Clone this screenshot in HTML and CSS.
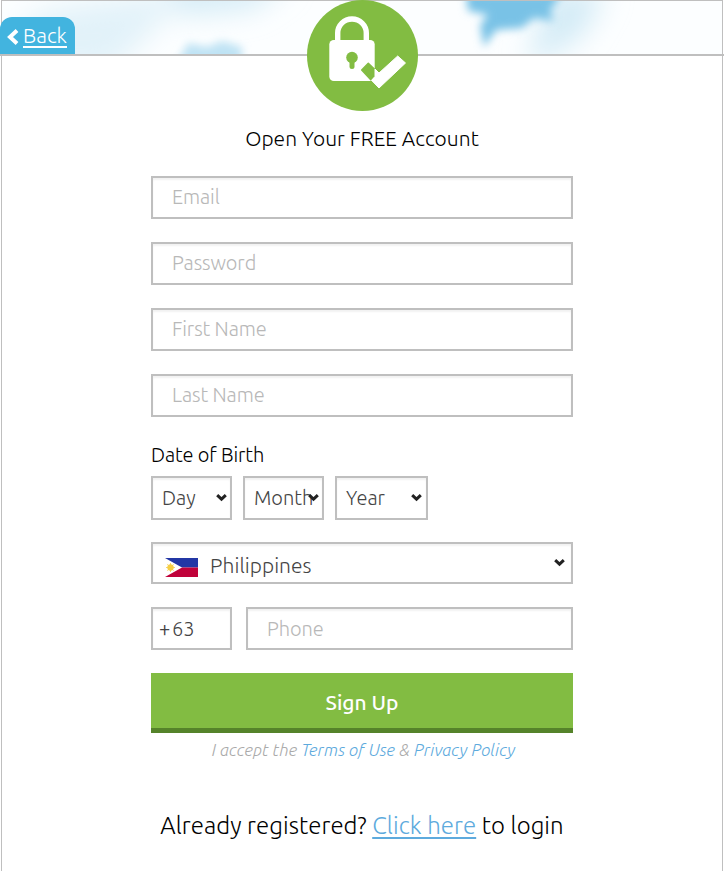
FILE: index.html
```
<!DOCTYPE html>
<html lang="en">
<head>
    <meta charset="UTF-8">
    <meta name="viewport" content="width=device-width, initial-scale=1.0">
    <title>Open Your FREE Account</title>
    <link rel="stylesheet" href="styles.css">
</head>
<body>

<div class="page">
    <header class="header">
        <svg class="sky" viewBox="0 0 720 53" preserveAspectRatio="none">
            <defs>
                <filter id="soft" x="-50%" y="-50%" width="200%" height="200%"><feGaussianBlur stdDeviation="4"/></filter>
                <filter id="softer" x="-50%" y="-50%" width="200%" height="200%"><feGaussianBlur stdDeviation="14"/></filter>
            </defs>
            <rect width="720" height="53" fill="#fcfeff"/>
            <g filter="url(#softer)">
                <path d="M20 20L60 5L180 -10L160 20L110 70L20 70Z" fill="#e2f2f9"/>
                <path d="M165 -20L290 -20L250 8L175 14Z" fill="#d3ebf6"/>
                <path d="M550 -10L605 -10L580 35L540 60L525 60Z" fill="#d3ebf6"/>
            </g>
            <g filter="url(#soft)">
                <path d="M174 64L186 42L205 46L220 40L240 46L240 64Z" fill="#bfe3f4"/>
                <path d="M464 -8L560 -8L548 10L552 20L532 17L520 27L494 29L482 46L478 24L486 14L466 10Z" fill="#79c2e6"/>
                <path d="M484 -4H546V10L516 20L510 26H490Z" fill="#79c2e6"/>
            </g>
        </svg>
        <a class="back" href="#">
            <svg width="12" height="16" viewBox="0 0 12 16"><path d="M10 1.5L3 8L10 14.5" fill="none" stroke="#fff" stroke-width="4"/></svg>
            <span>Back</span>
        </a>
        <svg class="lock" width="111" height="111" viewBox="0 0 111 111">
            <circle cx="55.5" cy="55.5" r="55.5" fill="#82bc42"/>
            <path d="M30.7 42V33a14.3 14 0 0 1 28.6 0V42" fill="none" stroke="#fff" stroke-width="5.4"/>
            <rect x="22.3" y="40" width="45.4" height="41" rx="4.5" fill="#fff"/>
            <circle cx="45" cy="57.5" r="5.8" fill="#82bc42"/>
            <path d="M45 59V66.5" stroke="#82bc42" stroke-width="5" stroke-linecap="round"/>
            <path d="M54.7 70L61.3 63.2L67.3 69V76L64 80Z" fill="#82bc42" stroke="#82bc42" stroke-width="1.5" stroke-linejoin="round"/>
            <path d="M68 69L72 73L90.7 56L98.5 63L72 88L64.5 80.3L68 76.5Z" fill="#fff" stroke="#fff" stroke-width="1" stroke-linejoin="round"/>
        </svg>
    </header>

    <form class="signup">
        <h1 class="title">Open Your FREE Account</h1>
        <input class="field" type="email" placeholder="Email">
        <input class="field" type="password" placeholder="Password">
        <input class="field" type="text" placeholder="First Name">
        <input class="field" type="text" placeholder="Last Name">

        <div class="birth-label">Date of Birth</div>
        <div class="birth">
            <div class="select day"><span>Day</span><svg class="arrow" width="11" height="8" viewBox="0 0 11 8"><path d="M1.2 1.2L5.5 5.2L9.8 1.2"/></svg></div>
            <div class="select month"><span>Month</span><svg class="arrow" width="11" height="8" viewBox="0 0 11 8"><path d="M1.2 1.2L5.5 5.2L9.8 1.2"/></svg></div>
            <div class="select year"><span>Year</span><svg class="arrow" width="11" height="8" viewBox="0 0 11 8"><path d="M1.2 1.2L5.5 5.2L9.8 1.2"/></svg></div>
        </div>

        <div class="select country">
            <svg class="flag" width="33" height="19" viewBox="0 0 33 19">
                <rect width="33" height="9.5" fill="#2337a5"/>
                <rect y="9.5" width="33" height="9.5" fill="#c0023a"/>
                <path d="M0 0L17 9.5L0 19Z" fill="#fff"/>
                <circle cx="5.5" cy="9.5" r="3.2" fill="#f5ce45"/>
                <path d="M5.5 5V14M1 9.5H10M2.3 6.3L8.7 12.7M8.7 6.3L2.3 12.7" stroke="#f5ce45" stroke-width=".8"/>
            </svg>
            <span>Philippines</span>
            <svg class="arrow" width="11" height="8" viewBox="0 0 11 8"><path d="M1.2 1.2L5.5 5.2L9.8 1.2"/></svg>
        </div>

        <div class="phone-row">
            <div class="code"><b>+</b><span>63</span></div>
            <input class="field phone" type="tel" placeholder="Phone">
        </div>

        <button class="submit" type="button">Sign Up</button>
        <p class="terms">I accept the <a href="#">Terms of Use</a> &amp; <a href="#">Privacy Policy</a></p>
        <p class="login">Already registered? <a href="#">Click here</a> to login</p>
    </form>
</div>

</body>
</html>
```
FILE: styles.css
```
* { box-sizing: border-box; }
body { margin: 0; background: #fff; color: #000; font-family: Ubuntu, "Open Sans", sans-serif; font-weight: 300; overflow: hidden; }
.page { width: 722px; height: 871px; margin-left: 1px; border: 1px solid #bfbfbf; border-bottom: 0; }

.header { position: relative; height: 55px; border-bottom: 2px solid #bfbfbf; margin: 0 -2px; padding: 16px 2px 0 0; }
.sky { position: absolute; left: 2px; top: 0; width: 720px; height: 53px; }
.back { position: relative; display: flex; align-items: center; gap: 4px; width: 75px; height: 37px; padding: 2px 0 0 7px; background: #42b4df; border-radius: 12px 12px 0 0; color: #fff; font-size: 21px; text-decoration: none; }
.back span { line-height: 21px; border-bottom: 2px solid #fff; }
.lock { position: absolute; left: 307px; top: -1px; }

.signup { width: 422px; margin-left: 149px; }
.title { height: 120px; margin: 0; padding-top: 67px; font-size: 21px; line-height: 30px; font-weight: 300; letter-spacing: 0.05px; text-align: center; white-space: nowrap; }
.field { display: block; width: 100%; height: 43px; margin: 0 0 23px; padding: 0 0 2px 19px; border: 2px solid #bfbfbf; border-radius: 0; box-shadow: inset 0 2px 2px #f2f2f2; background: #fff; font: 300 20px Ubuntu, "Open Sans", sans-serif; letter-spacing: -0.1px; outline: none; }
.field::placeholder { color: #b8b8b8; opacity: 1; }

.birth-label { height: 36px; font-size: 20px; line-height: 30px; letter-spacing: -0.12px; }
.birth { display: flex; gap: 11px; margin-bottom: 22px; }
.select, .code { display: flex; align-items: center; border: 2px solid #bfbfbf; box-shadow: inset 0 2px 2px #f2f2f2; color: #444; font-size: 20px; white-space: nowrap; }
.select { width: 81px; height: 44px; padding: 0 3px 0 9px; }
.select span { flex: 1; width: 0; padding-bottom: 2px; }
.arrow { flex: none; fill: none; stroke: #222; stroke-width: 3; }
.year { width: 93px; padding-right: 4px; }
.country { width: 422px; height: 42px; padding: 0 6px 0 12px; margin-bottom: 23px; font-size: 21px; }
.flag { margin: 8px 12px 0 0; }
.country span { padding: 4px 0 0; letter-spacing: 0.05px; }

.phone-row { display: flex; gap: 14px; height: 66px; }
.code { width: 81px; height: 43px; padding-left: 6px; }
.code b { width: 13px; font-weight: 400; }
.phone { width: 327px; padding-bottom: 0; }

.submit { display: block; width: 100%; height: 60px; border: 0; border-bottom: 5px solid #55832a; background: #82bc42; color: #fff; font: 500 21px Ubuntu, "Open Sans", sans-serif; padding: 2px 0 0; }
.terms { margin: 2px 0 0; height: 72px; padding-left: 3px; color: #aaa; font-size: 17px; line-height: 30px; letter-spacing: 0.08px; font-style: italic; text-align: center; white-space: nowrap; }
.terms a { color: #5daadd; text-decoration: none; }
.login { margin: 0; font-size: 24px; line-height: 38px; letter-spacing: 0.07px; text-align: center; white-space: nowrap; }
.login a { color: #5daadd; text-decoration: underline; text-decoration-thickness: 2px; text-decoration-skip-ink: none; text-underline-offset: 3px; }
```
